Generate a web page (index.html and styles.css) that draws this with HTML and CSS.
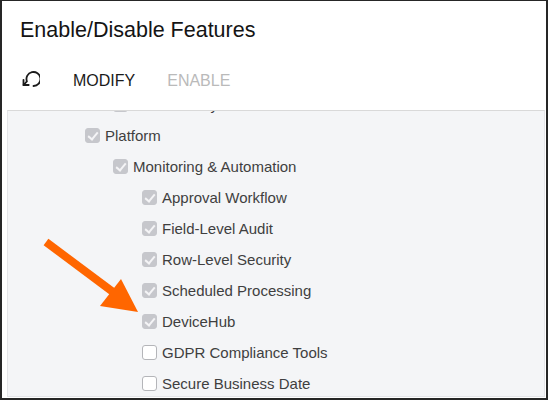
FILE: index.html
```html
<!DOCTYPE html>
<html lang="en">
<head>
  <meta charset="utf-8">
  <title>Enable/Disable Features</title>
  <link rel="stylesheet" href="styles.css">
</head>
<body>

  <div class="window">
    <header class="head">
      <h1 class="title">Enable/Disable Features</h1>
      <nav class="toolbar">
        <button class="tool icon" title="Undo">
          <svg width="20" height="20" viewBox="0 0 20 20" fill="none" stroke="#1a1a1a" stroke-width="1.8" stroke-linecap="round" stroke-linejoin="round">
            <path d="M3.5 14 L6.9 10.4 A7 7 0 1 1 13.5 15"/>
            <path d="M3.5 8.8 V14 H8.7"/>
          </svg>
        </button>
        <button class="tool">Modify</button>
        <button class="tool" disabled>Enable</button>
      </nav>
    </header>

    <section class="panel">
      <ul class="tree">
        <li class="item lvl-2"><span class="box on"></span>Data Privacy</li>
        <li class="item lvl-1"><span class="box on"></span>Platform</li>
        <li class="item lvl-2"><span class="box on"></span>Monitoring &amp; Automation</li>
        <li class="item lvl-3"><span class="box on"></span>Approval Workflow</li>
        <li class="item lvl-3"><span class="box on"></span>Field-Level Audit</li>
        <li class="item lvl-3"><span class="box on"></span>Row-Level Security</li>
        <li class="item lvl-3"><span class="box on"></span>Scheduled Processing</li>
        <li class="item lvl-3"><span class="box on"></span>DeviceHub</li>
        <li class="item lvl-3"><span class="box"></span>GDPR Compliance Tools</li>
        <li class="item lvl-3"><span class="box"></span>Secure Business Date</li>
      </ul>
    </section>

    <!-- callout arrow drawn over the screenshot -->
    <svg class="callout" width="548" height="400" viewBox="0 0 548 400">
      <line x1="46" y1="242" x2="113" y2="292" stroke="#ff6600" stroke-width="8"/>
      <polygon points="121,279 100,306 138,312" fill="#ff6600"/>
    </svg>
  </div>

</body>
</html>
```

FILE: styles.css
```css
* {
  margin: 0;
  padding: 0;
  box-sizing: border-box;
}

html {
  font-family: "Liberation Sans", Arial, sans-serif;
}

body {
  width: 548px;
  height: 400px;
  overflow: hidden;
  background: #fff;
}

.window {
  position: relative;
  display: flex;
  flex-direction: column;
  width: 548px;
  height: 400px;
  border: solid #262626;
  border-width: 1px 2px 2px 2px;
  background: #fff;
}

.head {
  padding: 16px 0 0 18px;
}

.title {
  font-size: 21.5px;
  font-weight: 400;
  line-height: 26px;
  color: #141414;
}

.toolbar {
  display: flex;
  align-items: center;
  height: 20px;
  margin-top: 28px;
}

.tool {
  background: none;
  border: 0;
  font: inherit;
  font-size: 16px;
  line-height: 20px;
  text-transform: uppercase;
  color: #1a1a1a;
  margin-right: 32px;
}
.tool:disabled {
  color: #bababa;
}
.tool.icon {
  display: flex;
  margin-right: 33px;
  height: 20px;
}

.panel {
  flex: 1;
  margin: 19px 1px 1px 5px;
  background: #f4f5f7;
  border: 1px solid #e4e5e8;
  border-top-color: #d9d9d9;
  overflow: hidden;
}

.tree {
  list-style: none;
  margin-top: -22px;
}

.item {
  display: flex;
  align-items: center;
  height: 31px;
  font-size: 15px;
  color: #3f3f3f;
}
.lvl-1 { padding-left: 77px; }
.lvl-2 { padding-left: 105px; }
.lvl-3 { padding-left: 134px; }

.box {
  position: relative;
  flex-shrink: 0;
  width: 15px;
  height: 15px;
  margin-right: 5px;
  border: 1px solid #b4b5b9;
  border-radius: 3px;
  background: #fff;
}
.box.on {
  background: #c6c7cc;
  border-color: #c6c7cc;
}
.box.on::after {
  content: "";
  position: absolute;
  left: 4px;
  top: 1px;
  width: 4px;
  height: 8px;
  border: solid #f4f4f6;
  border-width: 0 2px 2px 0;
  transform: rotate(40deg);
}

.callout {
  position: absolute;
  left: -2px;
  top: -1px;
  pointer-events: none;
}
```
